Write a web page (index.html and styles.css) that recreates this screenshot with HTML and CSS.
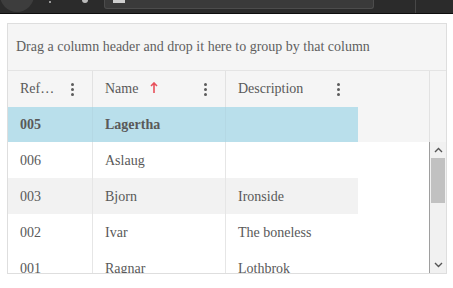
FILE: index.html
```html
<!DOCTYPE html>
<html lang="en">
<head>
  <meta charset="UTF-8">
  <title>Grid</title>
  <link rel="stylesheet" href="styles.css">
</head>
<body>

  <!-- browser chrome strip -->
  <div class="chrome">
    <div class="chrome-btn"></div>
    <div class="chrome-arrow"></div>
    <div class="chrome-reload"></div>
    <div class="address"><span class="address-icon"></span></div>
    <div class="chrome-sep"></div>
  </div>

  <div class="grid">
    <div class="group-panel">Drag a column header and drop it here to group by that column</div>

    <div class="header">
      <div class="hcell">
        <span class="htitle">Reference</span>
        <span class="kebab"><i></i><i></i><i></i></span>
      </div>
      <div class="hcell">
        <span class="htitle">Name <svg class="sort" width="8" height="12" viewBox="0 0 8 12"><path d="M4 1 L4 11 M1 4 L4 1 L7 4" fill="none" stroke="#e8505b" stroke-width="1.6"/></svg></span>
        <span class="kebab"><i></i><i></i><i></i></span>
      </div>
      <div class="hcell">
        <span class="htitle">Description</span>
        <span class="kebab"><i></i><i></i><i></i></span>
      </div>
      <div class="hfill"></div>
      <div class="hscroll"></div>
    </div>

    <div class="pinned">
      <div class="cell">005</div>
      <div class="cell">Lagertha</div>
      <div class="cell"></div>
      <div class="pfill"></div>
    </div>

    <div class="body">
      <div class="rows">
        <div class="row">
          <div class="cell">006</div>
          <div class="cell">Aslaug</div>
          <div class="cell"></div>
        </div>
        <div class="row alt">
          <div class="cell">003</div>
          <div class="cell">Bjorn</div>
          <div class="cell">Ironside</div>
        </div>
        <div class="row">
          <div class="cell">002</div>
          <div class="cell">Ivar</div>
          <div class="cell">The boneless</div>
        </div>
        <div class="row">
          <div class="cell">001</div>
          <div class="cell">Ragnar</div>
          <div class="cell">Lothbrok</div>
        </div>
      </div>
      <div class="scrollbar">
        <div class="sb-btn"><svg width="9" height="6" viewBox="0 0 9 6"><path d="M1 5 L4.5 1.5 L8 5" fill="none" stroke="#555" stroke-width="1.4"/></svg></div>
        <div class="sb-thumb"></div>
        <div class="sb-track"></div>
        <div class="sb-btn"><svg width="9" height="6" viewBox="0 0 9 6"><path d="M1 1 L4.5 4.5 L8 1" fill="none" stroke="#555" stroke-width="1.4"/></svg></div>
      </div>
    </div>
  </div>

</body>
</html>
```

FILE: styles.css
```css
body {
  margin: 0;
  font-family: "Liberation Serif", "Times New Roman", serif;
  font-size: 14px;
  color: #595959;
  background: #fff;
  overflow: hidden;
}

.chrome {
  height: 13px;
  background: #2b2b2b;
  border-bottom: 1px solid #0e0e0e;
  display: flex;
  align-items: flex-start;
  overflow: hidden;
}

.chrome-btn {
  width: 34px;
  height: 34px;
  margin: -22px 0 0 0;
  border-radius: 50%;
  background: #3d3d3d;
  flex: none;
}

.chrome-arrow {
  width: 2px;
  height: 2px;
  margin: 1px 0 0 15px;
  background: #999;
  flex: none;
}

.chrome-reload {
  width: 6px;
  height: 3px;
  margin: 0 0 0 31px;
  border-radius: 0 0 3px 3px;
  background: #bbb;
  flex: none;
}

.address {
  width: 268px;
  height: 8px;
  margin-left: 16px;
  background: #3a3a3a;
  border: 1px solid #4c4c4c;
  border-top: none;
  border-radius: 0 0 3px 3px;
  flex: none;
}

.address-icon {
  display: block;
  width: 12px;
  height: 3px;
  margin: 0 0 0 8px;
  background: #cfcfcf;
}

.chrome-sep {
  width: 1px;
  height: 13px;
  margin-left: 41px;
  background: #474747;
}

.grid {
  width: 438px;
  height: 249px;
  margin: 9px 0 0 7px;
  border: 1px solid #dedede;
  display: flex;
  flex-direction: column;
  overflow: hidden;
}

.group-panel {
  height: 46px;
  line-height: 46px;
  padding-left: 8px;
  background: #f5f5f5;
  border-bottom: 1px solid #e4e4e4;
  color: #5f5f5f;
  white-space: nowrap;
  flex: none;
}

.header {
  height: 36px;
  display: grid;
  grid-template-columns: 85px 133px 132px 72px 16px;
  background: #f5f5f5;
  flex: none;
}

.hcell {
  display: flex;
  align-items: center;
  justify-content: space-between;
  padding: 0 18px 0 12px;
  border-right: 1px solid #e2e2e2;
  min-width: 0;
}

.hcell:nth-child(3) {
  border-right: none;
}

.htitle {
  white-space: nowrap;
  overflow: hidden;
  text-overflow: ellipsis;
  min-width: 0;
}

.hcell:first-child .htitle {
  max-width: 36px;
}

.sort {
  margin-left: 8px;
  vertical-align: -1px;
}

.kebab {
  display: flex;
  flex-direction: column;
  gap: 2px;
  flex: none;
}

.kebab i {
  width: 3px;
  height: 3px;
  border-radius: 50%;
  background: #5c5c5c;
}

.hfill {
  border-right: 1px solid #e2e2e2;
}

.pinned {
  height: 35px;
  display: grid;
  grid-template-columns: 85px 133px 132px 1fr;
  flex: none;
}

.pinned .cell {
  background: #b9dfeb;
  font-weight: bold;
  border-right-color: #b4d8e4;
}

.pinned .cell:nth-child(3) {
  border-right: none;
}

.pfill {
  background: #f5f5f5;
  border-right: 16px solid #f5f5f5;
  box-shadow: inset -1px 0 0 #e2e2e2;
}

.cell {
  padding-left: 12px;
  line-height: 35px;
  border-right: 1px solid #e6e6e6;
  white-space: nowrap;
}

.body {
  flex: 1;
  display: flex;
  min-height: 0;
}

.rows {
  flex: 1;
  overflow: hidden;
  border-right: 1px solid #9e9e9e;
}

.row {
  height: 36px;
  width: 350px;
  display: grid;
  grid-template-columns: 85px 133px 132px;
}

.row .cell {
  line-height: 37px;
}

.row .cell:nth-child(3) {
  border-right: none;
}

.row.alt {
  background: #f2f2f2;
}

.scrollbar {
  width: 16px;
  background: #f1f1f1;
  display: flex;
  flex-direction: column;
  flex: none;
}

.sb-btn {
  height: 16px;
  display: flex;
  align-items: center;
  justify-content: center;
  flex: none;
}

.sb-thumb {
  height: 45px;
  margin: 0 1px;
  background: #c1c1c1;
  flex: none;
}

.sb-track {
  flex: 1;
}
```
